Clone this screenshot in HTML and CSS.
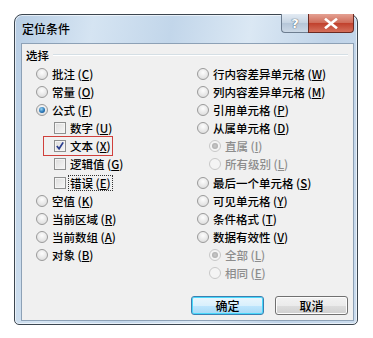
FILE: index.html
```html
<!DOCTYPE html>
<html>
<head>
<meta charset="utf-8">
<link rel="stylesheet" href="styles.css">
</head>
<body>
<div class="window">
  <div class="titlebar">
    <span class="title">定位条件</span>
    <div class="caption-btns">
      <div class="cbtn help">?</div>
      <div class="cbtn close">
        <svg width="14" height="11" viewBox="0 0 14 11"><path d="M2 1.5 L12 9.5 M12 1.5 L2 9.5" stroke="#fff" stroke-width="2.6" stroke-linecap="square"/></svg>
      </div>
    </div>
  </div>
  <div class="client">
    <div class="group-head"><span>选择</span><div class="line"></div></div>
    <div class="cols">
      <div class="col left">
        <div class="item"><span class="radio"></span><span>批注 (<u>C</u>)</span></div>
        <div class="item"><span class="radio"></span><span>常量 (<u>O</u>)</span></div>
        <div class="item"><span class="radio on"></span><span>公式 (<u>F</u>)</span></div>
        <div class="item sub"><span class="check"></span><span>数字 (<u>U</u>)</span></div>
        <div class="item sub"><span class="hl"><span class="check on"><svg width="10" height="10" viewBox="0 0 11 11"><path d="M2 5.5 L4.5 8.5 L9 1.5" stroke="#2a3d8f" stroke-width="1.9" fill="none"/></svg></span><span>文本 (<u>X</u>)</span></span></div>
        <div class="item sub"><span class="check"></span><span class="focus">逻辑值 (<u>G</u>)</span></div>
        <div class="item sub"><span class="check"></span><span class="focus on">错误 (<u>E</u>)</span></div>
        <div class="item"><span class="radio"></span><span>空值 (<u>K</u>)</span></div>
        <div class="item"><span class="radio"></span><span>当前区域 (<u>R</u>)</span></div>
        <div class="item"><span class="radio"></span><span>当前数组 (<u>A</u>)</span></div>
        <div class="item"><span class="radio"></span><span>对象 (<u>B</u>)</span></div>
      </div>
      <div class="col right">
        <div class="item"><span class="radio"></span><span>行内容差异单元格 (<u>W</u>)</span></div>
        <div class="item"><span class="radio"></span><span>列内容差异单元格 (<u>M</u>)</span></div>
        <div class="item"><span class="radio"></span><span>引用单元格 (<u>P</u>)</span></div>
        <div class="item"><span class="radio"></span><span>从属单元格 (<u>D</u>)</span></div>
        <div class="item sub dis"><span class="radio on"></span><span>直属 (<u>I</u>)</span></div>
        <div class="item sub dis"><span class="radio"></span><span>所有级别 (<u>L</u>)</span></div>
        <div class="item"><span class="radio"></span><span>最后一个单元格 (<u>S</u>)</span></div>
        <div class="item"><span class="radio"></span><span>可见单元格 (<u>Y</u>)</span></div>
        <div class="item"><span class="radio"></span><span>条件格式 (<u>T</u>)</span></div>
        <div class="item"><span class="radio"></span><span>数据有效性 (<u>V</u>)</span></div>
        <div class="item sub dis"><span class="radio on"></span><span>全部 (<u>L</u>)</span></div>
        <div class="item sub dis"><span class="radio"></span><span>相同 (<u>E</u>)</span></div>
      </div>
    </div>
    <div class="buttons">
      <div class="btn default">确定</div>
      <div class="btn">取消</div>
    </div>
  </div>
</div>
</body>
</html>
```
FILE: styles.css
```css
* { box-sizing: border-box; }
body {
  margin: 0;
  background: #fff;
  font-family: "Noto Sans CJK SC", "Noto Sans", sans-serif;
  font-size: 11.5px;
  font-weight: 500;
  color: #000;
}
.window {
  margin: 14px 0 0 14px;
  width: 344px;
  height: 311px;
  border: 1px solid #3c4650;
  border-radius: 8px 8px 5px 5px;
  background: linear-gradient(100deg, #b7cde4 0%, #d5e4f2 20%, #c2d6ea 40%, #dbe8f4 60%, #bfd3e8 80%, #cbdcee 100%);
  padding: 0 3px 3px 6px;
  display: flex;
  flex-direction: column;
  box-shadow: inset 0 0 0 1px rgba(255,255,255,0.6);
}
.titlebar {
  height: 28px;
  display: flex;
  align-items: flex-start;
  justify-content: space-between;
}
.title {
  margin-top: 6px;
  margin-left: 1px;
  font-size: 12px;
  line-height: 16px;
  color: #000;
}
.caption-btns {
  display: flex;
  margin-top: -1px;
}
.cbtn {
  height: 19px;
  border: 1px solid #6d7d90;
  border-top: none;
  display: flex;
  align-items: center;
  justify-content: center;
}
.help {
  width: 27px;
  border-radius: 0 0 0 4px;
  border-right: none;
  background: linear-gradient(#e3ebf3, #c6d4e3 50%, #b5c6d8 51%, #cbd8e6);
  color: #fff;
  font-family: "DejaVu Sans", sans-serif;
  font-weight: bold;
  font-size: 13px;
  text-shadow: 0 0 1px #435466, 0 0 1px #435466;
}
.close {
  width: 46px;
  border-radius: 0 0 4px 0;
  border-color: #6b2a22;
  background: linear-gradient(#e4a193, #cf6b58 50%, #c0402c 51%, #d5705c);
}
.client {
  flex: 1;
  background: #f0f0f0;
  border: 1px solid #8da1b6;
  padding: 4px 5px 0 4px;
  display: flex;
  flex-direction: column;
}
.group-head {
  display: flex;
  align-items: center;
  height: 14px;
}
.group-head span { line-height: 14px; padding: 0 4px 0 0; }
.group-head .line {
  flex: 1;
  height: 2px;
  border-top: 1px solid #d5dfe5;
  border-bottom: 1px solid #fff;
}
.cols {
  display: flex;
  margin-top: 2.5px;
}
.col { display: flex; flex-direction: column; }
.left { width: 169px; padding-left: 10px; }
.right { padding-left: 2px; }
.item {
  height: 18.17px;
  display: flex;
  align-items: center;
  white-space: nowrap;
  line-height: 14px;
}
.item u { text-decoration: underline; text-underline-offset: 1px; }
.left .sub { padding-left: 18px; }
.right .sub { padding-left: 12px; }
.radio {
  width: 12px;
  height: 12px;
  border-radius: 50%;
  border: 1px solid #9a9a9a;
  background: radial-gradient(circle at 50% 35%, #fdfdfd, #e2e2e2 70%, #d6d6d6);
  margin-right: 4px;
  flex: none;
  position: relative;
}
.radio.on::after {
  content: "";
  position: absolute;
  left: 2px; top: 2px;
  width: 6px; height: 6px;
  border-radius: 50%;
  background: radial-gradient(circle at 40% 35%, #9ad6f4, #2a78b8 55%, #0d3f78);
}
.dis { color: #8d8d8d; }
.dis .radio { border-color: #c8c8c8; background: #f4f4f4; }
.dis .radio.on::after { background: radial-gradient(circle, #c9c9c9, #a5a5a5); }
.check {
  width: 12px;
  height: 12px;
  border: 1px solid #8e8f8f;
  background: linear-gradient(135deg, #dcdcdc, #f6f6f6);
  box-shadow: inset 0 0 0 1px #f4f4f4;
  margin-right: 4px;
  flex: none;
  display: flex;
  align-items: center;
  justify-content: center;
}
.hl {
  display: flex;
  align-items: center;
  border: 1px solid #d0403c;
  margin-left: -11px;
  padding-left: 10px;
  width: 70px;
  height: 20px;
}
.focus { padding: 0 1px; margin-left: -1px; }
.focus.on {
  outline: 1px dotted #333;
  outline-offset: 0;
}
.buttons {
  margin-top: auto;
  margin-bottom: 5px;
  display: flex;
  justify-content: flex-end;
  gap: 11px;
}
.btn {
  width: 73px;
  height: 19px;
  font-size: 12px;
  border: 1px solid #707070;
  border-radius: 3px;
  background: linear-gradient(#f2f2f2, #ebebeb 50%, #dddddd 51%, #cfcfcf);
  display: flex;
  align-items: center;
  justify-content: center;
  box-shadow: inset 0 0 0 1px #fcfcfc;
}
.btn.default {
  border-color: #3c7fb1;
  box-shadow: inset 0 0 0 1px #48d8fb;
  background: linear-gradient(#eaf6fd, #d9f0fc 50%, #bee6fd 51%, #a7d9f5);
}
```
